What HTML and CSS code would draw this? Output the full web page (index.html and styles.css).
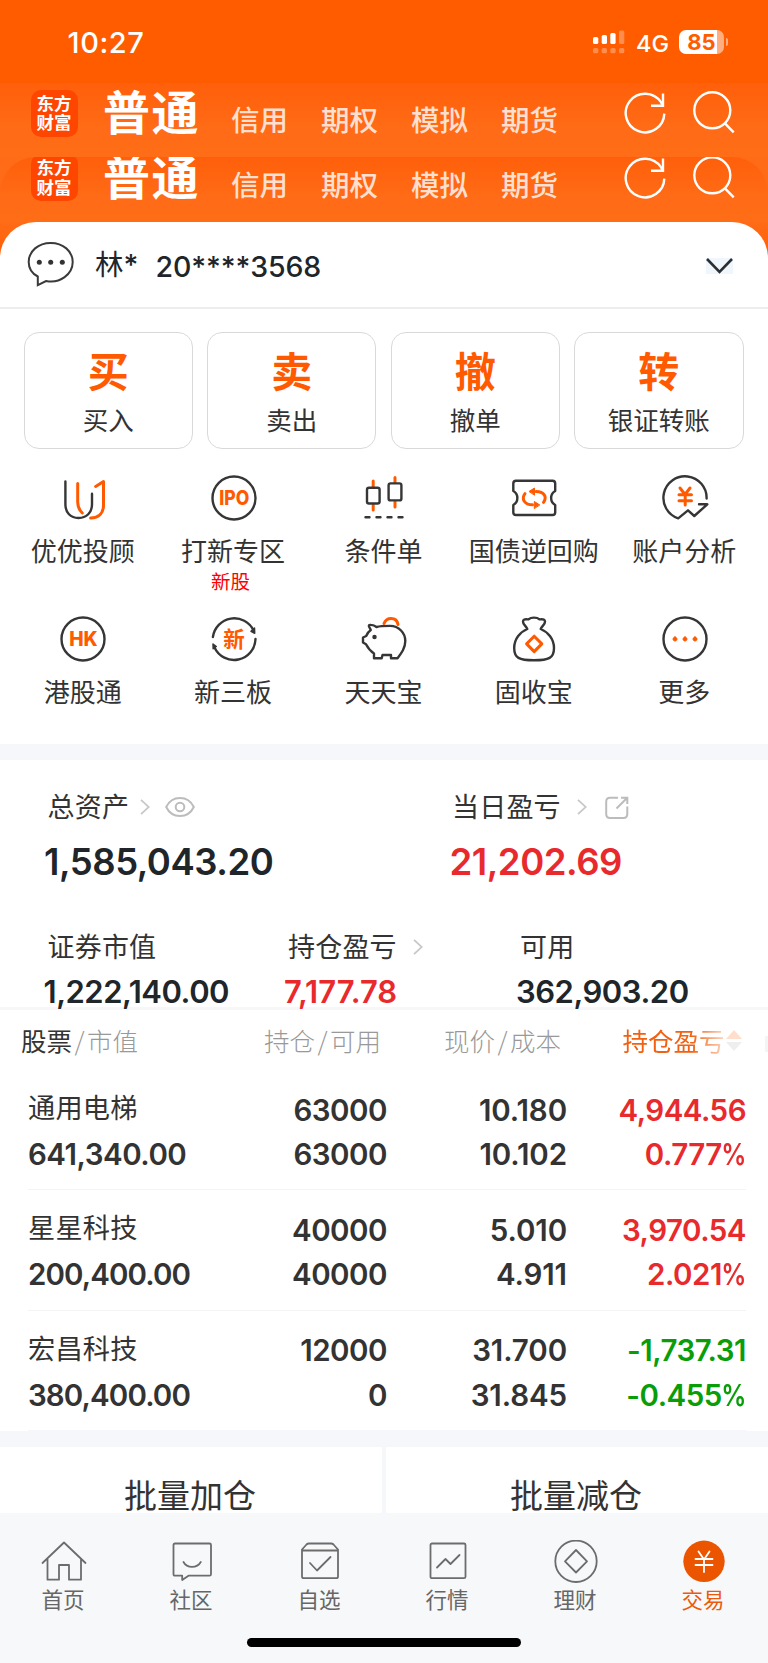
FILE: index.html
```html
<!DOCTYPE html>
<html lang="zh-CN">
<head>
<meta charset="utf-8">
<title>交易</title>
<link rel="stylesheet" href="styles.css">
</head>
<body>
<svg class="defs" width="0" height="0">
  <symbol id="refresh" viewBox="0 0 44 44"><path d="M41.3 22.6A19.3 19.3 0 1 1 38 11.2l1.6 3"/><path d="M40 2.6v12.2H28"/></symbol>
  <symbol id="search" viewBox="0 0 44 44"><circle cx="20.3" cy="20.3" r="18"/><path d="M32.7 33.2l9 9.2"/></symbol>
  <symbol id="next" viewBox="0 0 10 16"><path d="M1 .8L8.8 8 1 15.2"/></symbol>
</svg>
<div class="phone">
  <header class="status">
    <span class="time">10:27</span>
    <svg class="signal" width="32" height="24" viewBox="0 0 32 24" fill="#fff">
      <rect x="0" y="7" width="5.3" height="7" rx="1.6"/><rect x="8.7" y="5" width="5.3" height="9" rx="1.6"/><rect x="17.3" y="3" width="5.3" height="11" rx="1.6"/>
      <g opacity=".3"><rect x="26" y=".4" width="5.3" height="13.6" rx="1.6"/><rect x="0" y="18" width="5.3" height="5.3" rx="1.6"/><rect x="8.7" y="18" width="5.3" height="5.3" rx="1.6"/><rect x="17.3" y="18" width="5.3" height="5.3" rx="1.6"/><rect x="26" y="18" width="5.3" height="5.3" rx="1.6"/></g>
    </svg>
    <span class="net">4G</span>
    <span class="battery">85</span><i class="nub"></i>
  </header>

  <div class="strip">
    <div class="logo"><span>东方</span><span>财富</span></div>
    <b class="account-type">普通</b>
    <nav class="types"><span>信用</span><span>期权</span><span>模拟</span><span>期货</span></nav>
    <svg class="ic refresh"><use href="#refresh"/></svg>
    <svg class="ic search"><use href="#search"/></svg>
  </div>
  <div class="strip-wrap">
    <div class="strip second">
      <div class="logo"><span>东方</span><span>财富</span></div>
      <b class="account-type">普通</b>
      <nav class="types"><span>信用</span><span>期权</span><span>模拟</span><span>期货</span></nav>
      <svg class="ic refresh"><use href="#refresh"/></svg>
      <svg class="ic search"><use href="#search"/></svg>
    </div>
  </div>

  <div class="card-wrap">
  <section class="user">
    <svg width="48" height="48" viewBox="0 0 48 48" fill="none" stroke="#3a3a3c" stroke-width="2"><path d="M10.8 36.500V45.200L19 41C33 44 45.700 34 45.700 22C45.700 11 36 3 23.700 3S1.700 11 1.700 22C1.700 28 5 33.500 10.800 36.500Z"/><g fill="#333" stroke="none"><circle cx="12.300" cy="22.200" r="2.500"/><circle cx="23.700" cy="22.200" r="2.500"/><circle cx="35.300" cy="22.200" r="2.500"/></g></svg>
    <span class="name">林<em>*</em></span><span class="acct">20****3568</span>
    <svg class="down" width="27" height="16" viewBox="0 0 27 16" fill="none" stroke="#2b2f33" stroke-width="2.600"><path d="M1 1L13.500 13.800 26 1"/></svg>
  </section>
  </div>

  <section class="quick">
    <div><b>买</b><span>买入</span></div>
    <div><b>卖</b><span>卖出</span></div>
    <div><b>撤</b><span>撤单</span></div>
    <div><b>转</b><span>银证转账</span></div>
  </section>

  <section class="menu">
    <div><svg viewBox="0 0 48 48"><path d="M6.400 7.500V30.500C6.400 38.500 11.500 44 19.500 44S33 38.500 33 30.500V19.800"/><g class="o"><path d="M18.700 9.500V28C18.700 33 20 36 23.300 39"/><path d="M36.700 12.500L44.500 7.500V31C44.500 39 40 44 31.600 44"/></g></svg><span>优优投顾</span></div>
    <div><svg viewBox="0 0 48 48"><circle cx="24" cy="24" r="21.500"/><text x="9.300" y="31" font-size="20" textLength="30" lengthAdjust="spacingAndGlyphs">IPO</text></svg><span>打新专区</span><small>新股</small></div>
    <div><svg viewBox="0 0 48 48"><g class="o"><path d="M13.200 7v5.500M13.200 31v5M35 3.500v5M35 28v5"/></g><rect x="7" y="13.700" width="12.600" height="15.800" rx="2"/><rect x="28.600" y="9.400" width="12.800" height="17" rx="2"/><path d="M5.500 43.300h4M16.500 43.300h4M27.500 43.300h4M38.500 43.300h4"/></svg><span>条件单</span></div>
    <div><svg viewBox="0 0 48 48"><path d="M6 6.800H42.500Q45.200 6.800 45.200 9.500V17C39.800 20 39.800 28 45.200 31V38.500Q45.200 41 42.500 41H6Q3.300 41 3.300 38.500V31C8.700 28 8.700 20 3.300 17V9.500Q3.300 6.800 6 6.800Z"/><g class="o"><path d="M33.500 28.300C37.500 23 34 17.500 26 17.500"/><path d="M15 19.700C11 25 14.500 30.800 22.500 30.800"/><path class="solid" d="M19.300 17.300L24.500 14V20.800Z M29.500 30.800L24.300 27.500V34.200Z"/></g></svg><span>国债逆回购</span></div>
    <div><svg viewBox="0 0 48 48"><path d="M45.600 24.500A21.600 21.600 0 1 0 17.200 44.400L27 36.300 33.300 42 46.300 30.300H38"/><g class="o"><path d="M19 14l5 6.500 5-6.500M18 20.800h12.500M18 26.700h12.500M24.200 20.800v10.200"/></g></svg><span>账户分析</span></div>
    <div><svg viewBox="0 0 48 48"><circle cx="24" cy="24" r="21.500"/><text x="10.200" y="31.200" font-size="20" textLength="28.500" lengthAdjust="spacingAndGlyphs">HK</text></svg><span>港股通</span></div>
    <div><svg viewBox="0 0 48 48"><path d="M2.900 22A21.500 21.500 0 0 1 43.600 15.500M45.500 24A21.500 21.500 0 0 1 4.500 32.500"/><path class="dark" d="M41 16.300L44.500 13 44.700 18.300ZM3.200 33.700L3 29 6.300 31.500Z"/><text class="cn" x="13.200" y="31.800" font-size="21.500">新</text></svg><span>新三板</span></div>
    <div><svg viewBox="0 0 48 48"><path d="M9 11.500C8.500 10 9.500 9.800 11 9.900C13.500 10 15 10.800 16.500 12C20 11 24 10.900 30 10.900C39 11 45.300 18 45.300 26C45.300 33 41.500 38 37.500 43.300H31V40H22.500L21.700 43.300H14V38.500C11 36.500 8 33 6 29.200L3 27.500V22.500L6.200 21C7.500 18 8.500 16.500 10.800 15Z"/><circle class="dark" cx="14.500" cy="22" r="1.500"/><path class="o" d="M24 8.500C25.500 5 28 3.500 31 3.500C35 3.500 37.500 6 38 9.500"/></svg><span>天天宝</span></div>
    <div><svg viewBox="0 0 48 48"><path d="M17.300 14C15.500 10 13 10 13 6.500C13 3.500 16 4.500 18.500 4.300C21 2 27 2 29.500 4.300C32 4.500 35 3.500 35 6.500C35 10 32.500 10 30.700 14C38 17 44 24 44 33C44 43 39 45.300 24 45.300S4.200 43 4.200 33C4.200 24 10 17 17.300 14Z"/><path class="o" d="M24.200 21.200L31.800 28.900 24.200 36.600 16.600 28.900Z"/></svg><span>固收宝</span></div>
    <div><svg viewBox="0 0 48 48"><circle cx="24" cy="24" r="21.500"/><path class="solid" d="M14 22a2 2 0 1 0 .01 0ZM24 22a2 2 0 1 0 .01 0ZM34 22a2 2 0 1 0 .01 0Z"/></svg><span>更多</span></div>
  </section>

  <section class="assets">
    <div class="totals">
      <div><p class="label">总资产<svg class="next"><use href="#next"/></svg><svg class="eye" width="30" height="20" viewBox="0 0 30 20"><path d="M1.200 10C7-2 23-2 28.800 10C23 22 7 22 1.200 10Z"/><circle cx="15" cy="10" r="4.300"/></svg></p><p class="big">1,585,043.20</p></div>
      <div><p class="label">当日盈亏<svg class="next day"><use href="#next"/></svg><svg class="share" width="24" height="24" viewBox="0 0 24 24"><path d="M13 1.800H5Q1.200 1.800 1.200 5.500V18Q1.200 22 5 22H18.500Q22.300 22 22.300 18V10.500M16 1.800H22.300V8M22 2L11.500 12.500"/></svg></p><p class="big red">21,202.69</p></div>
    </div>
    <div class="details">
      <div><p class="label">证券市值</p><p class="mid">1,222,140.00</p></div>
      <div><p class="label">持仓盈亏<svg class="next hold"><use href="#next"/></svg></p><p class="mid red">7,177.78</p></div>
      <div><p class="label">可用</p><p class="mid">362,903.20</p></div>
    </div>
  </section>

  <section class="positions">
    <div class="thead">
      <span><b>股票</b><i>/</i>市值</span><span>持仓<i>/</i>可用</span><span>现价<i>/</i>成本</span>
      <span class="sort">持仓盈亏<svg width="16" height="22" viewBox="0 0 16 22"><path fill="#ff5a00" d="M0 9L8 0l8 9Z"/><path fill="#aaa" d="M0 12h16l-8 9Z"/></svg></span><s></s>
    </div>
    <div class="row"><div><p class="stock">通用电梯</p><p>641,340.00</p></div><div><p>63000</p><p>63000</p></div><div class="price"><p>10.180</p><p>10.102</p></div><div class="red"><p>4,944.56</p><p>0.777<i>%</i></p></div></div>
    <div class="row"><div><p class="stock">星星科技</p><p class="tight">200,400.00</p></div><div><p>40000</p><p>40000</p></div><div class="price"><p>5.010</p><p>4.911</p></div><div class="red"><p>3,970.54</p><p>2.021<i>%</i></p></div></div>
    <div class="row"><div><p class="stock">宏昌科技</p><p class="tight">380,400.00</p></div><div><p>12000</p><p>0</p></div><div class="price"><p>31.700</p><p>31.845</p></div><div class="green"><p>-1,737.31</p><p>-0.455<i>%</i></p></div></div>
  </section>

  <section class="batch"><span>批量加仓</span><span>批量减仓</span></section>

  <footer>
    <nav class="tabs">
      <div><svg viewBox="0 0 46 44"><path d="M1.500 23L23 2.500 44.500 23M6.500 19V39.700H18V25H28V39.700H40V19"/></svg><span>首页</span></div>
      <div><svg viewBox="0 0 46 44"><path d="M6 3.500H40.500Q42 3.500 42 5V34.200Q42 35.700 40.500 35.700H19.500L13.200 40V35.700H6Q4.500 35.700 4.500 34.200V5Q4.500 3.500 6 3.500ZM14.500 22C18 28.500 28 28.500 31.800 22"/></svg><span>社区</span></div>
      <div><svg viewBox="0 0 46 44"><path d="M5 9.500L9.500 4.500Q10.500 3.500 12 3.500H34Q35.500 3.500 36.500 4.500L41 9.500V36.500Q41 38.200 39.300 38.200H6.700Q5 38.200 5 36.500ZM5 10.500H41M13 23L20 30.500 33.500 17"/></svg><span>自选</span></div>
      <div><svg viewBox="0 0 46 44"><rect x="5.500" y="3.500" width="35" height="34.700" rx="1.500"/><path d="M12 27.500L20.500 19 25.500 24 34.500 15"/></svg><span>行情</span></div>
      <div><svg viewBox="0 0 46 44"><circle cx="23" cy="21.300" r="20.700"/><path d="M23 10L34 21.300 23 32.500 12 21.300Z"/></svg><span>理财</span></div>
      <div class="on"><svg viewBox="0 0 46 44"><circle class="disc" cx="23" cy="21.300" r="20.700"/><path d="M17.500 11.500L23 19.500 28.500 11.500M14.500 19H31.500M14.500 25H31.500M23 19.500V32"/></svg><span>交易</span></div>
    </nav>
    <div class="home"></div>
  </footer>
</div>
</body>
</html>
```
FILE: styles.css
```css
* { box-sizing: border-box; margin: 0; padding: 0; }
body { width: 768px; background: #fff; font-family: "Noto Sans CJK SC", sans-serif; color: #333; }
i, em { font-style: normal; }
svg { display: block; flex: none; }
.defs { position: absolute; }
.phone { width: 768px; height: 1663px; overflow: hidden; background: #fff; }

.status { height: 83px; background: #ff5c00; display: flex; align-items: flex-start; color: #fff; font-family: Inter, sans-serif; }
.time { width: 525px; padding-left: 67.500px; margin-top: 24px; line-height: 37px; font-size: 29px; font-weight: 500; letter-spacing: .6px; }
.signal { margin: 30px 0 0 68px; }
.net { margin: 28px 0 0 11px; width: 43px; font-size: 23.500px; line-height: 31px; font-weight: 500; }
.battery { margin-top: 30px; width: 45px; height: 24px; border-radius: 7px; background: linear-gradient(90deg, #fff 38px, #ffae80 38px); color: #ff5c00; font-size: 22px; font-weight: 700; line-height: 24px; text-align: center; }
.nub { width: 2.500px; height: 8px; margin: 38px 0 0 1.500px; border-radius: 0 3px 3px 0; background: #ffae80; }

.strip { height: 74px; padding-left: 31px; display: flex; align-items: flex-start; overflow: hidden; background: linear-gradient(#ff5f0a, #ff6b16 60%, #ff6d17); color: #fff; }
.strip > * { position: relative; flex: none; }
.strip-wrap { background: #ff6b17; }
.second { height: 65px; border-radius: 36px 36px 0 0; }
.second > * { top: -9.500px; }
.logo { width: 47px; height: 47px; margin-top: 6.500px; border-radius: 10px; background: #ff4600; padding: 3px 1px 0 0; display: flex; flex-direction: column; align-items: center; font-size: 17.500px; line-height: 19.500px; font-weight: 700; }
.account-type { margin: 0 0 0 25px; width: 128px; font-size: 47px; line-height: 54px; font-weight: 700; letter-spacing: 1.500px; }
.types { display: flex; width: 391.500px; font-size: 28.500px; line-height: 40px; margin-top: 15.500px; font-weight: 500; color: #ffdfcf; }
.types span { width: 90px; }
.second .types { padding-top: 1px; }
.ic { width: 44px; height: 44px; fill: none; stroke: #fff; stroke-width: 2.400px; }
.refresh { margin: 8.300px 0 0 .500px; }
.search { margin: 7px 0 0 25px; }
.card-wrap { background: linear-gradient(#ff6b17, #ff5c00 46px); }
.user { height: 87px; border-radius: 36px 36px 0 0; background: #fff; border-bottom: 2px solid #ededf0; display: flex; align-items: flex-start; padding: 18px 35px 0 27px; color: #20252a; }
.name { margin-left: 20px; margin-top: 3px; width: 60.500px; font-size: 28.500px; line-height: 40px; }
.name em, .acct { font-family: Inter, sans-serif; font-size: 28.500px; font-weight: 500; }
.acct { margin-top: 7.500px; line-height: 37px; flex: 1; letter-spacing: -.1px; }
.down { margin-top: 18px; background: #eff7fd; }

.quick { display: grid; grid-template-columns: repeat(4, 1fr); gap: 14.300px; padding: 23px 24.500px 0 23.500px; }
.quick div { height: 117px; border: 1.500px solid #d9d9d9; border-radius: 15px; display: flex; flex-direction: column; align-items: center; }
.quick b { font-size: 41px; line-height: 50px; margin-top: 10.500px; color: #ff5a00; }
.quick span { font-size: 25.500px; line-height: 34px; margin-top: 8.500px; }

.menu { display: grid; grid-template-columns: repeat(5, 150.400px); grid-template-rows: 140.500px 129.500px; margin: 25px 0 0 8px; }
.menu div { display: flex; flex-direction: column; align-items: center; }
.menu svg { width: 48px; height: 48px; fill: none; stroke: #363636; stroke-width: 2.400px; stroke-linecap: round; stroke-linejoin: round; }
.menu .o { stroke: #ff5a00; stroke-width: 3px; }
.menu .solid { fill: #ff5a00; stroke: #ff5a00; stroke-width: 1px; }
.menu .dark { fill: #363636; stroke-width: 1.500px; }
.menu text { fill: #ff5a00; stroke: none; font-family: Inter, sans-serif; font-weight: 800; }
.menu text.cn { font-family: "Noto Sans CJK SC", sans-serif; font-weight: 700; }
.menu span { font-size: 26px; line-height: 36px; margin: 10px 1px 0 0; }
.menu small { font-size: 19.500px; line-height: 26px; color: #f00; margin-left: -6px; }

.assets { border-top: 16px solid #f6f7fa; height: 263px; padding: 27.500px 0 0 47.500px; }
.label { display: flex; font-size: 27px; line-height: 36px; letter-spacing: .2px; }
.next { width: 10px; height: 16px; margin: 11px 0 0 10.500px; fill: none; stroke: #c8c8c8; stroke-width: 1.800px; }
.day { margin-left: 16px; } .hold { margin-left: 16px; }
.eye, .share { fill: none; stroke: #bcbcbc; stroke-width: 2px; margin: 9px 0 0 15px; }
.share { margin: 8px 0 0 18.500px; }
.big, .mid { font-family: Inter, sans-serif; font-weight: 600; color: #20252a; letter-spacing: -.48px; }
.totals { display: grid; grid-template-columns: 404.500px 1fr; }
.details { display: grid; grid-template-columns: 240.500px 232px 1fr; margin-top: 43.500px; }
.big { font-size: 36.500px; line-height: 46px; margin: 15px 0 0 -3.500px; }
.big.red { margin-left: -2.500px; }
.mid { font-size: 31px; line-height: 36px; margin: 10px 0 0 -4px; }
.mid.red { letter-spacing: 0; }
.red, p.red { color: #e82a2c; }
.green { color: #0a9d0a; }

.positions { height: 423.500px; }
.thead { border-top: 3px solid #f7f7f9; height: 63px; padding: 12px 0 0 21px; display: grid; grid-template-columns: 243px 180px 178.500px 141px 1fr; font-size: 25.500px; line-height: 36px; color: #999; font-weight: 300; }
.thead b { font-weight: 400; color: #333; }
.thead i { padding: 0 2.500px; }
.sort { display: flex; color: #f26011; font-weight: 400; mask-image: linear-gradient(90deg, #000 68px, rgba(0,0,0,.2) 104px); }
.sort svg { margin: 8px 0 0 1px; }
.thead s { width: 3px; height: 16px; margin: 14px 0 0 0; justify-self: end; background: #f4f4f4; }
.row { display: grid; grid-template-columns: 160px 199px 180px 179px; margin: 0 22px 0 28px; height: 120.300px; padding-top: 17.500px; border-bottom: 1.500px solid #f4f4f6; font: 600 29.500px/44.500px Inter, sans-serif; letter-spacing: -.5px; text-align: right; }
.row:last-child { border-color: #f6f7fa; }
.row div:first-child { text-align: left; }
.row .price { letter-spacing: -.1px; }
.row .tight { letter-spacing: -.9px; }
.row i { display: inline-block; transform: scaleX(.85); transform-origin: right; margin-left: -5px; }
.row .stock { font: 400 27.200px/44.500px "Noto Sans CJK SC", sans-serif; letter-spacing: .2px; position: relative; top: -3.500px; }

.batch { height: 82.500px; border-top: 16.500px solid #f6f7fa; display: grid; grid-template-columns: 1fr 1fr; gap: 4px; background: #f6f7fa; font-size: 33px; line-height: 60px; text-align: center; }
.batch span { background: #fff; padding: 17.500px 2px 0 0; height: 66px; overflow: hidden; }
footer { height: 150px; background: #f7f8fa; padding-top: 26.500px; }
.tabs { display: grid; grid-template-columns: repeat(6, 128px); }
.tabs div { display: flex; flex-direction: column; align-items: center; font-size: 21.500px; line-height: 30px; color: #666; }
.tabs svg { width: 46px; height: 44px; fill: none; stroke: #6c6c6c; stroke-width: 1.800px; stroke-linejoin: round; stroke-linecap: round; }
.tabs span { margin: .5px 2px 0 0; }
.tabs .on { color: #ec5a0a; }
.tabs .on svg { stroke: #fff; }
.tabs .disc { fill: #ec5500; stroke: none; }
.home { width: 274px; height: 9px; border-radius: 5px; background: #000; margin: 23.500px auto 0; }
```
